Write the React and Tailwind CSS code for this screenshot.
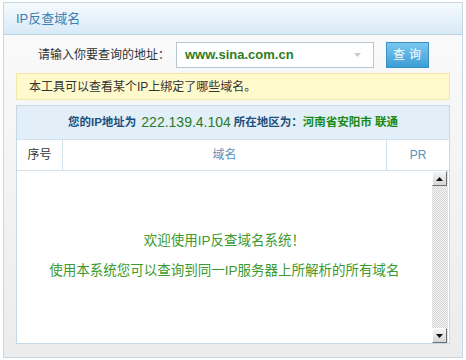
import React from "react";

const FONT = { fontFamily: '"Liberation Sans", "Noto Sans CJK SC", sans-serif' };

const ScrollButton = ({ up }) => (
  <div className="h-[15px] w-[15px] flex items-center justify-center bg-gradient-to-b from-[#f4f4f4] to-[#d6d6d6] border border-t-white border-l-white border-r-[#6e6e6e] border-b-[#6e6e6e]">
    <svg width="7" height="4" viewBox="0 0 7 4">
      {up ? <path d="M0 4 L3.5 0 L7 4 Z" fill="#111" /> : <path d="M0 0 L3.5 4 L7 0 Z" fill="#111" />}
    </svg>
  </div>
);

export default function App() {
  return (
    <div className="w-[466px] h-[360px] bg-white pt-[2px] pl-[3px]" style={FONT}>
      <div className="w-[460px] h-[356px] border border-[#c6d7e4] flex flex-col bg-gradient-to-b from-[#fbfbfb] to-[#ececec]">
        {/* Title bar */}
        <div className="h-[32px] shrink-0 flex items-center pl-[12px] bg-gradient-to-b from-[#f5fafd] to-[#d8eaf7] border-b border-[#bcd3e4]">
          <span className="text-[13px] text-[#3f80b6]">IP反查域名</span>
        </div>

        <div className="flex-1 flex flex-col px-[12px] pb-[13px]">
          {/* Query row */}
          <div className="mt-[7px] h-[26px] flex items-center">
            <span className="ml-[22px] w-[138px] text-[12px] text-[#333]">请输入你要查询的地址：</span>
            <div className="w-[198px] h-[26px] bg-white border border-[#b8c6d2] flex items-center pl-[8px] pr-[12px]">
              <span className="flex-1 text-[13px] font-bold text-[#2f7d21]">www.sina.com.cn</span>
              <svg width="7" height="4" viewBox="0 0 7 4">
                <path d="M0 0 L3.5 4 L7 0 Z" fill="#c4ccd2" />
              </svg>
            </div>
            <button className="ml-[12px] w-[43px] h-[26px] bg-gradient-to-b from-[#79c8ef] to-[#3d9dd6] border border-[#3a8fc4] text-white text-[12px] tracking-[4px] pl-[3px]">
              查询
            </button>
          </div>

          {/* Notice */}
          <div className="mt-[5px] h-[27px] shrink-0 bg-[#fffacb] border border-[#f1e7a6] flex items-center pl-[12px] text-[12px] text-[#333]">
            本工具可以查看某个IP上绑定了哪些域名。
          </div>

          {/* Result table */}
          <div className="mt-[5px] flex-1 flex flex-col border border-[#c6d9e7] bg-white">
            <div className="h-[33px] shrink-0 bg-[#e2eff8] flex items-center justify-center text-[11.5px] font-bold text-[#1e4f7b]">
              <span>您的IP地址为</span>
              <span className="ml-[5px] text-[14px] font-normal text-[#2a7a2a]">222.139.4.104</span>
              <span className="ml-[3px]">所在地区为：</span>
              <span className="text-[#168a16]">河南省安阳市 联通</span>
            </div>

            <div className="h-[32px] shrink-0 flex border-t border-b border-[#d3e2ec] text-[12px]">
              <div className="w-[46px] flex items-center justify-center border-r border-[#d3e2ec] text-[#333]">序号</div>
              <div className="flex-1 flex items-center justify-center border-r border-[#d3e2ec] text-[#5d8fba]">域名</div>
              <div className="w-[62px] flex items-center justify-center text-[#5d8fba]">PR</div>
            </div>

            <div className="flex-1 flex">
              <div className="flex-1 flex flex-col items-center justify-center gap-[10px] pb-[2px] text-[13.5px] text-[#3b9a2d]">
                <span>欢迎使用IP反查域名系统！</span>
                <span>使用本系统您可以查询到同一IP服务器上所解析的所有域名</span>
              </div>
              <div className="w-[16px] mr-[1px] flex flex-col bg-[repeating-conic-gradient(#d4d4d4_0_25%,#f6f6f6_0_50%)] bg-[length:2px_2px]">
                <ScrollButton up />
                <div className="flex-1" />
                <ScrollButton />
              </div>
            </div>
          </div>
        </div>
      </div>
    </div>
  );
}
